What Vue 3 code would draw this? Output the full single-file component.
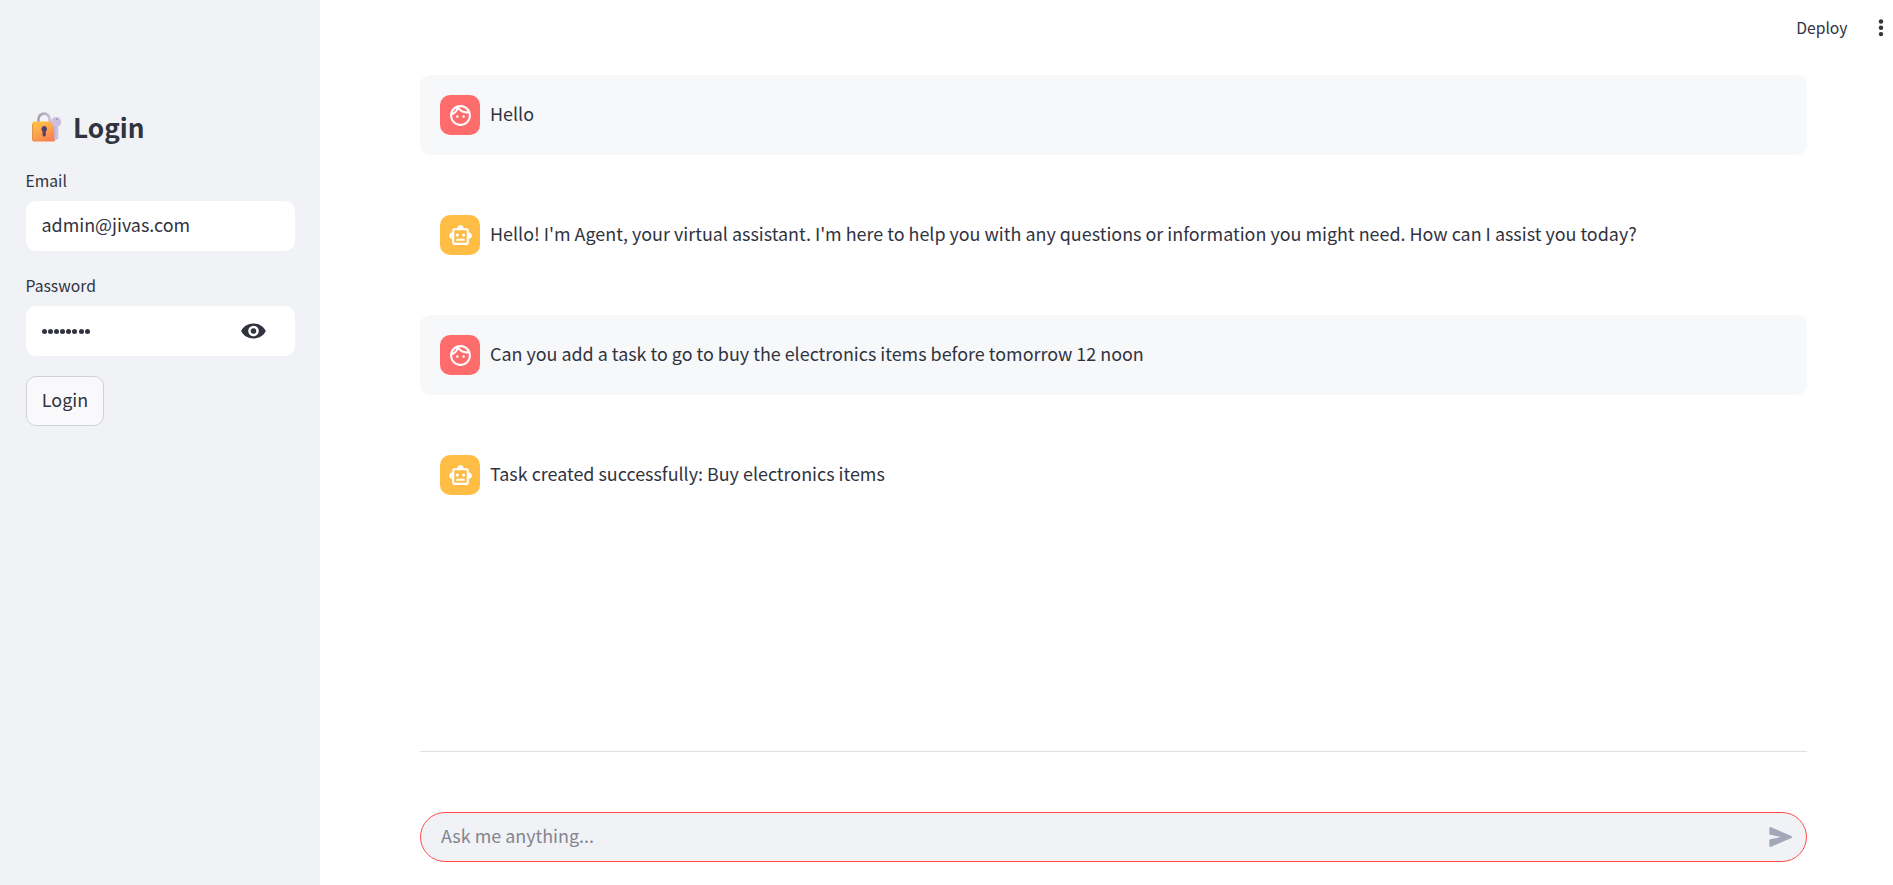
<script setup>
const messages = [
  { role: 'user', text: 'Hello' },
  { role: 'agent', text: "Hello! I'm Agent, your virtual assistant. I'm here to help you with any questions or information you might need. How can I assist you today?" },
  { role: 'user', text: 'Can you add a task to go to buy the electronics items before tomorrow 12 noon' },
  { role: 'agent', text: 'Task created successfully: Buy electronics items' },
]
const icons = {
  user: 'M10.25 13c0 .69-.56 1.25-1.25 1.25S7.75 13.69 7.75 13s.56-1.25 1.25-1.25 1.25.56 1.25 1.25zM15 11.75c-.69 0-1.25.56-1.25 1.25s.56 1.25 1.25 1.25 1.25-.56 1.25-1.25-.56-1.25-1.25-1.25zm7 .25c0 5.52-4.48 10-10 10S2 17.52 2 12 6.48 2 12 2s10 4.48 10 10zM10.66 4.12C12.06 6.44 14.6 8 17.5 8c.46 0 .91-.05 1.34-.12C17.44 5.56 14.9 4 12 4c-.46 0-.91.05-1.34.12zM4.42 9.47c1.71-.97 3.03-2.55 3.66-4.44C6.37 6 5.05 7.58 4.42 9.47zM20 12c0-.78-.12-1.53-.33-2.24-.7.15-1.42.24-2.17.24-3.13 0-5.92-1.44-7.76-3.69C8.69 8.87 6.6 10.88 4 11.86c.01.04 0 .09 0 .14 0 4.42 3.58 8 8 8s8-3.58 8-8z',
  agent: 'M20 9V7c0-1.1-.9-2-2-2h-3c0-1.66-1.34-3-3-3S9 3.34 9 5H6c-1.1 0-2 .9-2 2v2c-1.66 0-3 1.34-3 3s1.34 3 3 3v4c0 1.1.9 2 2 2h12c1.1 0 2-.9 2-2v-4c1.66 0 3-1.34 3-3s-1.34-3-3-3zm-2 10H6V7h12v12zm-9-6c-.83 0-1.5-.67-1.5-1.5S8.17 10 9 10s1.5.67 1.5 1.5S9.83 13 9 13zm7.5-1.5c0 .83-.67 1.5-1.5 1.5s-1.5-.67-1.5-1.5.67-1.5 1.5-1.5 1.5.67 1.5 1.5zM8 15h8v2H8v-2z',
}
</script>

<template>
  <div class="app">
    <aside class="sidebar">
      <h2 class="title">
        <svg class="lock" width="30" height="30" viewBox="0 0 30 30">
          <defs>
            <linearGradient id="body" x1="0" y1="0" x2="0.6" y2="1">
              <stop offset="0" stop-color="#fdc944" />
              <stop offset="0.55" stop-color="#fca64a" />
              <stop offset="1" stop-color="#f8814f" />
            </linearGradient>
            <linearGradient id="shackle" x1="0" y1="0" x2="1" y2="0">
              <stop offset="0" stop-color="#aaa0b4" />
              <stop offset="1" stop-color="#c7bfd0" />
            </linearGradient>
          </defs>
          <path d="M6.5 11V7.2a5.6 5.6 0 0 1 11.2 0V11" fill="none" stroke="url(#shackle)" stroke-width="2.6" />
          <rect x="0.2" y="9.500" width="23.300" height="20" rx="2.200" fill="url(#body)" />
          <path d="M.7 12v15.500q0 1.500 1.800 1.700" fill="none" stroke="#d98a4c" stroke-width="0.9" />
          <path d="M12.200 14a3 3 0 0 1 1.600 5.400v3.600a1.600 1.600 0 0 1-3.200 0v-3.600a3 3 0 0 1 1.600-5.400z" fill="#533f70" />
          <path d="M24.200 5a5 5 0 0 1 2.100 9.500v11.800l-1.800 1.500-2.500-.8v-2.200l1-1-1-1.300v-8A5 5 0 0 1 24.200 5z" fill="#cdbfdf" />
          <path d="M22.900 14.500v12" stroke="#b9a9cf" stroke-width="0.8" />
          <circle cx="24.800" cy="7.200" r="0.9" fill="#9e91b1" />
        </svg>
        <span>Login</span>
      </h2>
      <label class="label">Email</label>
      <div class="field"><span class="value">admin@jivas.com</span></div>
      <label class="label second">Password</label>
      <div class="field">
        <span class="dots"><i v-for="n in 8" :key="n"></i></span>
        <svg class="eye" width="25" height="16" viewBox="0 0 25 16">
          <path fill-rule="evenodd" d="M12.5.5C7 .5 2.200 3.400.2 8c2 4.600 6.800 7.500 12.300 7.500S22.800 12.600 24.800 8C22.800 3.400 18 .5 12.500.5zM12.500 2.700a5.300 5.300 0 1 1 0 10.600 5.300 5.300 0 0 1 0-10.600zM12.500 5.200a2.800 2.800 0 1 0 0 5.600 2.800 2.800 0 0 0 0-5.600z" fill="#31333f" />
        </svg>
      </div>
      <button class="login"><span>Login</span></button>
    </aside>

    <main class="main">
      <header class="toolbar">
        <span>Deploy</span>
        <svg width="6" height="18" viewBox="0 0 6 18" fill="#31333f">
          <circle cx="3" cy="2.500" r="2.200" /><circle cx="3" cy="8.800" r="2.200" /><circle cx="3" cy="15.100" r="2.200" />
        </svg>
      </header>
      <section class="chat">
        <div v-for="(m, i) in messages" :key="i" class="message" :class="m.role">
          <div class="avatar">
            <svg width="25" height="25" viewBox="0 0 24 24" fill="#fff"><path :d="icons[m.role]" /></svg>
          </div>
          <p>{{ m.text }}</p>
        </div>
      </section>
      <hr class="rule" />
      <div class="prompt">
        <span>Ask me anything...</span>
        <svg width="28" height="28" viewBox="0 0 24 24" fill="#a3a8b8">
          <path d="M3.400 20.400l17.450-7.480c.81-.35.81-1.490 0-1.840L3.400 3.600c-.66-.29-1.390.2-1.390.91L2 9.120c0 .5.37.93.87.99L12 12l-9.130 1.880c-.5.07-.87.5-.87 1l.01 4.610c0 .71.73 1.200 1.390.91z" />
        </svg>
      </div>
    </main>
  </div>
</template>

<style>
body { margin: 0; background: #fff; }
</style>

<style scoped>
.app {
  display: flex;
  width: 100%;
  height: 885px;
  overflow: hidden;
  color: #31333f;
  font-family: "Source Sans Pro", "Noto Sans CJK SC", "Noto Sans", sans-serif;
  font-size: 17.915px;
  line-height: 30px;
}
.app * { box-sizing: border-box; }
.sidebar {
  width: 320px;
  flex: none;
  background: #f0f2f6;
  padding: 107px 25px 0 26px;
  display: flex;
  flex-direction: column;
}
.title {
  margin: 0;
  height: 40px;
  padding-left: 6px;
  display: flex;
  align-items: center;
  gap: 11px;
  font-size: 26.200px;
  line-height: 40px;
  font-weight: 600;
}
.label {
  margin-top: 22px;
  margin-left: -0.5px;
  height: 24px;
  margin-bottom: 8px;
  font-size: 15.700px;
  line-height: 24px;
}
.label.second { margin-top: 23px; }
.field {
  height: 50px;
  flex: none;
  border-radius: 10px;
  background: #fff;
  padding: 0 29px 0 16px;
  display: flex;
  align-items: center;
  justify-content: space-between;
}
.value { padding-bottom: 4px; margin-left: -0.5px; }
.dots { display: flex; gap: 1.100px; }
.dots i { width: 5px; height: 5px; border-radius: 50%; background: #31333f; }
.login {
  width: 78px;
  height: 50px;
  margin-top: 20px;
  border: 1px solid #d0d2d8;
  border-radius: 10px;
  background: #f9f9fb;
  color: inherit;
  font: inherit;
  padding: 0 0 4px 0;
}
.main {
  flex: 1;
  display: flex;
  flex-direction: column;
}
.toolbar {
  height: 75px;
  padding: 13px 9.500px 0 0;
  display: flex;
  justify-content: flex-end;
  gap: 30px;
  font-size: 15.700px;
}
.toolbar svg { margin-top: 6px; }
.chat {
  height: 676px;
  padding: 0 86px 0 100px;
  display: flex;
  flex-direction: column;
  gap: 40px;
}
.message {
  height: 80px;
  padding: 0 20px;
  border-radius: 10px;
  display: flex;
  align-items: center;
  gap: 10px;
}
.message.user { background: #f7f8fa; }
.message p { margin: 0; padding-bottom: 4px; white-space: nowrap; }
.avatar {
  width: 40px;
  height: 40px;
  flex: none;
  border-radius: 10px;
  display: flex;
  align-items: center;
  justify-content: center;
}
.user .avatar { background: #ff6c6c; }
.agent .avatar { background: #ffbd45; }
.rule {
  width: 1387px;
  height: 1px;
  margin: 0 0 60px 100px;
  border: 0;
  background: #dfe0e2;
}
.prompt {
  width: 1387px;
  height: 50px;
  margin-left: 100px;
  padding: 0 11px 0 20px;
  border: 1px solid #ff4b4b;
  border-radius: 25px;
  background: #f0f2f6;
  color: #83858e;
  display: flex;
  align-items: center;
  justify-content: space-between;
}
.prompt span { padding-bottom: 5px; }
</style>
